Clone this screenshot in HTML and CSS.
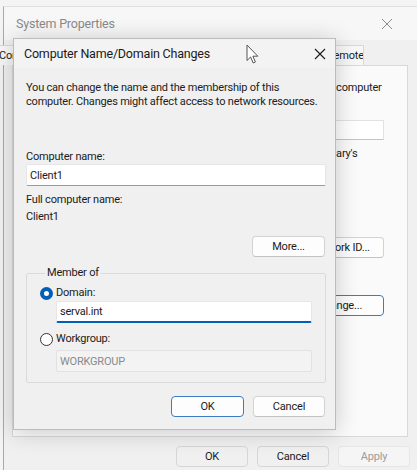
FILE: index.html
```html
<!DOCTYPE html>
<html lang="en">
<head>
    <meta charset="UTF-8">
    <title>Computer Name/Domain Changes</title>
    <link rel="stylesheet" href="styles.css">
</head>
<body>
    <div class="desk">
        <!-- System Properties window (behind) -->
        <div class="sys">
            <div class="sys-title">
                <span>System Properties</span>
                <svg class="sys-close" width="12" height="12" viewBox="0 0 12 12"><path d="M1 1L11 11M11 1L1 11" stroke="#8a8a8a" stroke-width="1"/></svg>
            </div>
            <div class="tabs">
                <div class="tab">Computer Name</div>
                <div class="tab">Hardware</div>
                <div class="tab">Advanced</div>
                <div class="tab">System Protection</div>
                <div class="tab">Remote</div>
            </div>
            <div class="panel">
                <p class="panel-text">Windows uses the following information to identify your computer<br>on the network.</p>
                <div class="panel-row">
                    <span>Computer description:</span>
                    <div class="panel-input"></div>
                </div>
                <p class="panel-hint">For example: "Kitchen Computer" or "Mary's<br>Computer".</p>
                <div class="panel-row small">
                    <span>Full computer name:</span>
                    <span class="panel-val">Client1</span>
                </div>
                <div class="panel-row small">
                    <span>Workgroup:</span>
                    <span class="panel-val">WORKGROUP</span>
                </div>
                <div class="panel-row action first">
                    <span>To use a wizard to join a domain or workgroup, click Network ID.</span>
                    <button class="btn">Network ID...</button>
                </div>
                <div class="panel-row action">
                    <span>To rename this computer or change its domain or workgroup, click Change.</span>
                    <button class="btn btn-default">Change...</button>
                </div>
            </div>
            <div class="sys-buttons">
                <button class="btn btn-dim">OK</button>
                <button class="btn btn-dim">Cancel</button>
                <button class="btn btn-dim btn-disabled">Apply</button>
            </div>
        </div>

        <!-- Computer Name/Domain Changes dialog -->
        <div class="dialog">
            <div class="dialog-title">
                <span>Computer Name/Domain Changes</span>
                <svg class="dialog-close" width="12" height="12" viewBox="0 0 12 12"><path d="M1 1L11 11M11 1L1 11" stroke="#1a1a1a" stroke-width="1.1"/></svg>
            </div>
            <div class="dialog-body">
                <p class="intro">You can change the name and the membership of this<br>computer. Changes might affect access to network resources.</p>

                <label class="field-label" for="compname">Computer name:</label>
                <input class="text-input" type="text" id="compname" value="Client1">

                <div class="full-label">Full computer name:</div>
                <div class="full-value">Client1</div>

                <button class="btn btn-more">More...</button>

                <fieldset class="member">
                    <legend>Member of</legend>
                    <div class="radio-row">
                        <span class="radio checked"></span>
                        <span>Domain:</span>
                    </div>
                    <input class="text-input indent focused" type="text" value="serval.int">
                    <div class="radio-row second">
                        <span class="radio"></span>
                        <span>Workgroup:</span>
                    </div>
                    <input class="text-input indent disabled" type="text" value="WORKGROUP" disabled>
                </fieldset>

                <div class="dialog-buttons">
                    <button class="btn btn-default">OK</button>
                    <button class="btn">Cancel</button>
                </div>
            </div>
        </div>

        <svg class="cursor" width="14" height="21" viewBox="0 0 14 21"><path d="M1 1L1 16.5L4.6 13L7.2 19L9.4 18L6.9 12.2L11.8 12.2Z" fill="#fff" stroke="#555" stroke-width="1" stroke-linejoin="round"/></svg>
    </div>
</body>
</html>
```

FILE: styles.css
```css
* {
    box-sizing: border-box;
}
body {
    margin: 0;
    font-family: Roboto, "Liberation Sans", sans-serif;
    font-size: 11px;
    letter-spacing: -0.2px;
    color: #1b1b1b;
    background: #f4f4f4;
}
.desk {
    position: relative;
    width: 417px;
    height: 470px;
    overflow: hidden;
    padding-top: 6px;
    padding-left: 3px;
}
p {
    margin: 0;
}

/* background window */
.sys {
    height: 470px;
    background: #f0f0f0;
    border-left: 1px solid #a9a9a9;
    border-top: 1px solid #e0e0e0;
    display: flex;
    flex-direction: column;
}
.sys-title {
    height: 33px;
    display: flex;
    align-items: center;
    justify-content: space-between;
    padding: 0 24px 0 12px;
    color: #8a8a8a;
    font-size: 12.5px;
    background: #f7f7f7;
}
.tabs {
    display: flex;
    height: 25px;
    padding: 5px 0 0 0;
    margin-left: -13px;
}
.tab {
    border: 1px solid #d9d9d9;
    border-bottom: none;
    background: #f7f7f7;
    padding: 2px 7px 0;
    white-space: nowrap;
    line-height: 16px;
    overflow: hidden;
}
.tab:nth-child(1) {
    width: 86px;
}
.tab:nth-child(2) {
    width: 64px;
}
.tab:nth-child(3) {
    width: 64px;
}
.tab:nth-child(4) {
    width: 114px;
}
.tab:nth-child(5) {
    width: 45px;
}
.panel {
    margin: 0 9px 0 8px;
    height: 372px;
    border: 1px solid #d9d9d9;
    background: #fafafa;
    padding: 15px 23px 0 22px;
    display: flex;
    flex-direction: column;
}
.panel-text {
    line-height: 14px;
    white-space: nowrap;
    padding-left: 38px;
}
.panel-row {
    display: flex;
    justify-content: space-between;
    align-items: center;
}
.panel-row:first-of-type {
    margin-top: 11px;
}
.panel-input {
    width: 222px;
    height: 20px;
    background: #fff;
    border: 1px solid #e2e2e2;
    border-bottom-color: #c4c4c4;
}
.panel-hint {
    margin: 7px 0 0 116px;
    line-height: 14px;
    white-space: nowrap;
    padding-left: 3px;
}
.panel-row.small {
    margin-top: 8px;
}
.panel-val {
    width: 222px;
}
.panel-row.action {
    margin-top: 30px;
    align-items: flex-start;
}
.panel-row.action.first {
    margin-top: 20px;
}
.panel-row.action span {
    width: 220px;
    line-height: 14px;
}
.panel-row.action .btn {
    width: 88px;
    height: 21px;
}
.sys-buttons {
    display: flex;
    justify-content: flex-end;
    gap: 9px;
    padding: 9px 7px 0 0;
}
.sys-buttons .btn {
    width: 72px;
    height: 21px;
}

/* buttons */
.btn {
    font-family: inherit;
    font-size: 11px;
    letter-spacing: -0.2px;
    color: #1b1b1b;
    background: #fdfdfd;
    border: 1px solid #d3d3d3;
    border-bottom-color: #c2c2c2;
    border-radius: 4px;
    padding: 0;
}
.btn-default {
    border: 1px solid #3d7cc0;
}
.btn-dim {
    background: #f0f0f0;
    border-color: #d6d6d6;
}
.btn-disabled {
    color: #9b9b9b;
    background: #f5f5f5;
    border-color: #e6e6e6;
}

/* dialog */
.dialog {
    position: absolute;
    left: 13px;
    top: 38px;
    width: 323px;
    height: 392px;
    background: #f0f0f0;
    border: 1px solid #bcbcbc;
    box-shadow: 0 2px 22px rgba(0, 0, 0, 0.2);
    display: flex;
    flex-direction: column;
}
.dialog-title {
    height: 29px;
    display: flex;
    align-items: center;
    justify-content: space-between;
    padding: 0 9px 0 10px;
    font-size: 12.5px;
    color: #1a1a1a;
    background: #f3f3f3;
}
.dialog-body {
    flex: 1;
    display: flex;
    flex-direction: column;
    padding: 13px 9px 0 12px;
}
.intro {
    line-height: 14px;
    white-space: nowrap;
    color: #222;
}
.field-label {
    margin-top: 41px;
    line-height: 14px;
}
.text-input {
    height: 22px;
    font-family: inherit;
    font-size: 11px;
    letter-spacing: -0.2px;
    color: #1b1b1b;
    background: #fff;
    border: 1px solid #e6e6e6;
    border-bottom: 1px solid #9a9a9a;
    border-radius: 2px;
    padding: 0 3px;
    outline: none;
}
.full-label {
    margin-top: 7px;
    line-height: 14px;
}
.full-value {
    margin-top: 3px;
    line-height: 14px;
}
.btn-more {
    align-self: flex-end;
    width: 73px;
    height: 21px;
    margin-top: 12px;
    margin-right: 1px;
}
.member {
    margin: 9px 0 0 0;
    padding: 6px 13px 10px 13px;
    border: 1px solid #dadada;
    border-radius: 2px;
    display: flex;
    flex-direction: column;
}
.member legend {
    padding: 0 2px;
    margin-left: 5px;
    line-height: 14px;
}
.radio-row {
    display: flex;
    align-items: center;
    gap: 3px;
    line-height: 14px;
}
.radio-row.second {
    margin-top: 9px;
}
.radio {
    width: 13px;
    height: 13px;
    border-radius: 50%;
    border: 1px solid #333;
    background: #fff;
}
.radio.checked {
    border: 4px solid #005fb8;
    background: #fff;
}
.indent {
    margin-left: 16px;
}
.text-input.focused {
    margin-top: 1px;
    border-bottom: 2px solid #005fb8;
}
.text-input.disabled {
    margin-top: 4px;
    background: #f3f3f3;
    border: 1px solid #e2e2e2;
    color: #8a8a8a;
}
.dialog-buttons {
    display: flex;
    justify-content: flex-end;
    gap: 9px;
    margin-top: 13px;
    padding-right: 1px;
}
.dialog-buttons .btn {
    width: 73px;
    height: 21px;
}
.dialog-buttons .btn:last-child {
    width: 72px;
}

.cursor {
    position: absolute;
    left: 246px;
    top: 44px;
}
```
